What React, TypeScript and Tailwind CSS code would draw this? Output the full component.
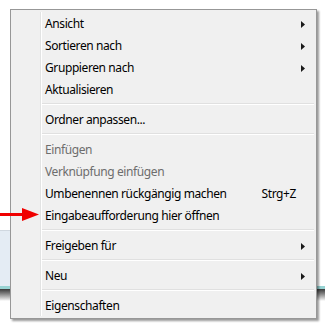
import React from 'react';

type Item =
  | { kind: 'sep' }
  | { kind: 'item'; label: string; disabled?: boolean; sub?: boolean; shortcut?: string };

const items: Item[] = [
  { kind: 'item', label: 'Ansicht', sub: true },
  { kind: 'item', label: 'Sortieren nach', sub: true },
  { kind: 'item', label: 'Gruppieren nach', sub: true },
  { kind: 'item', label: 'Aktualisieren' },
  { kind: 'sep' },
  { kind: 'item', label: 'Ordner anpassen...' },
  { kind: 'sep' },
  { kind: 'item', label: 'Einfügen', disabled: true },
  { kind: 'item', label: 'Verknüpfung einfügen', disabled: true },
  { kind: 'item', label: 'Umbenennen rückgängig machen', shortcut: 'Strg+Z' },
  { kind: 'item', label: 'Eingabeaufforderung hier öffnen' },
  { kind: 'sep' },
  { kind: 'item', label: 'Freigeben für', sub: true },
  { kind: 'sep' },
  { kind: 'item', label: 'Neu', sub: true },
  { kind: 'sep' },
  { kind: 'item', label: 'Eigenschaften' },
];

const SubArrow = () => (
  <svg width="4" height="7" viewBox="0 0 4 7" className="block">
    <polygon points="0,0 4,3.5 0,7" fill="#1a1a1a" />
  </svg>
);

const App = () => {
  return (
    <div className="relative w-[325px] h-[325px] bg-white overflow-hidden font-['Noto_Sans',sans-serif] text-[12px] tracking-[-0.4px]">
      {/* Window behind the menu */}
      <div className="absolute left-0 top-[230px] w-[14px] h-[56px] bg-[#e4ecf4] border-t border-[#d0d8e0]"></div>
      <div className="absolute left-0 top-[286px] w-full h-[3px] bg-[#97d3d3]"></div>
      <div className="absolute left-0 top-[289px] w-full h-[12px] bg-gradient-to-b from-[#3a3a3a] to-white"></div>

      {/* Context menu */}
      <div className="absolute left-[10px] top-[9px] w-[307px] border border-[#979797] bg-[#f0f0f0] p-[2px] shadow-[2px_2px_2px_rgba(0,0,0,0.4)]">
        <div className="flex">
          <div className="w-[27px] shrink-0"></div>
          <div className="w-[2px] shrink-0 border-l border-[#e2e3e3] border-r border-r-white"></div>
          <div className="flex-1 flex flex-col">
            {items.map((it, i) =>
              it.kind === 'sep' ? (
                <div key={i} className="h-[8px] flex flex-col justify-center">
                  <div className="h-[1px] bg-[#e0e0e0]"></div>
                  <div className="h-[1px] bg-white"></div>
                </div>
              ) : (
                <div key={i} className="h-[22px] flex items-center pt-[2px] pl-[3px] pr-[9px]">
                  <span className={`flex-1 whitespace-nowrap ${it.disabled ? 'text-[#6d6d6d]' : 'text-black'}`}>
                    {it.label}
                  </span>
                  {it.shortcut && <span className="text-black mr-[9px]">{it.shortcut}</span>}
                  {it.sub && <SubArrow />}
                </div>
              )
            )}
          </div>
        </div>
      </div>

      {/* Red arrow, drawn over the menu */}
      <svg className="absolute left-0 top-[207px] z-10" width="42" height="15" viewBox="0 0 42 15">
        <rect x="0" y="6" width="26" height="3" fill="#f00000" />
        <polygon points="22,1 39,7.5 22,14" fill="#f00000" />
      </svg>
    </div>
  );
};

export default App;
